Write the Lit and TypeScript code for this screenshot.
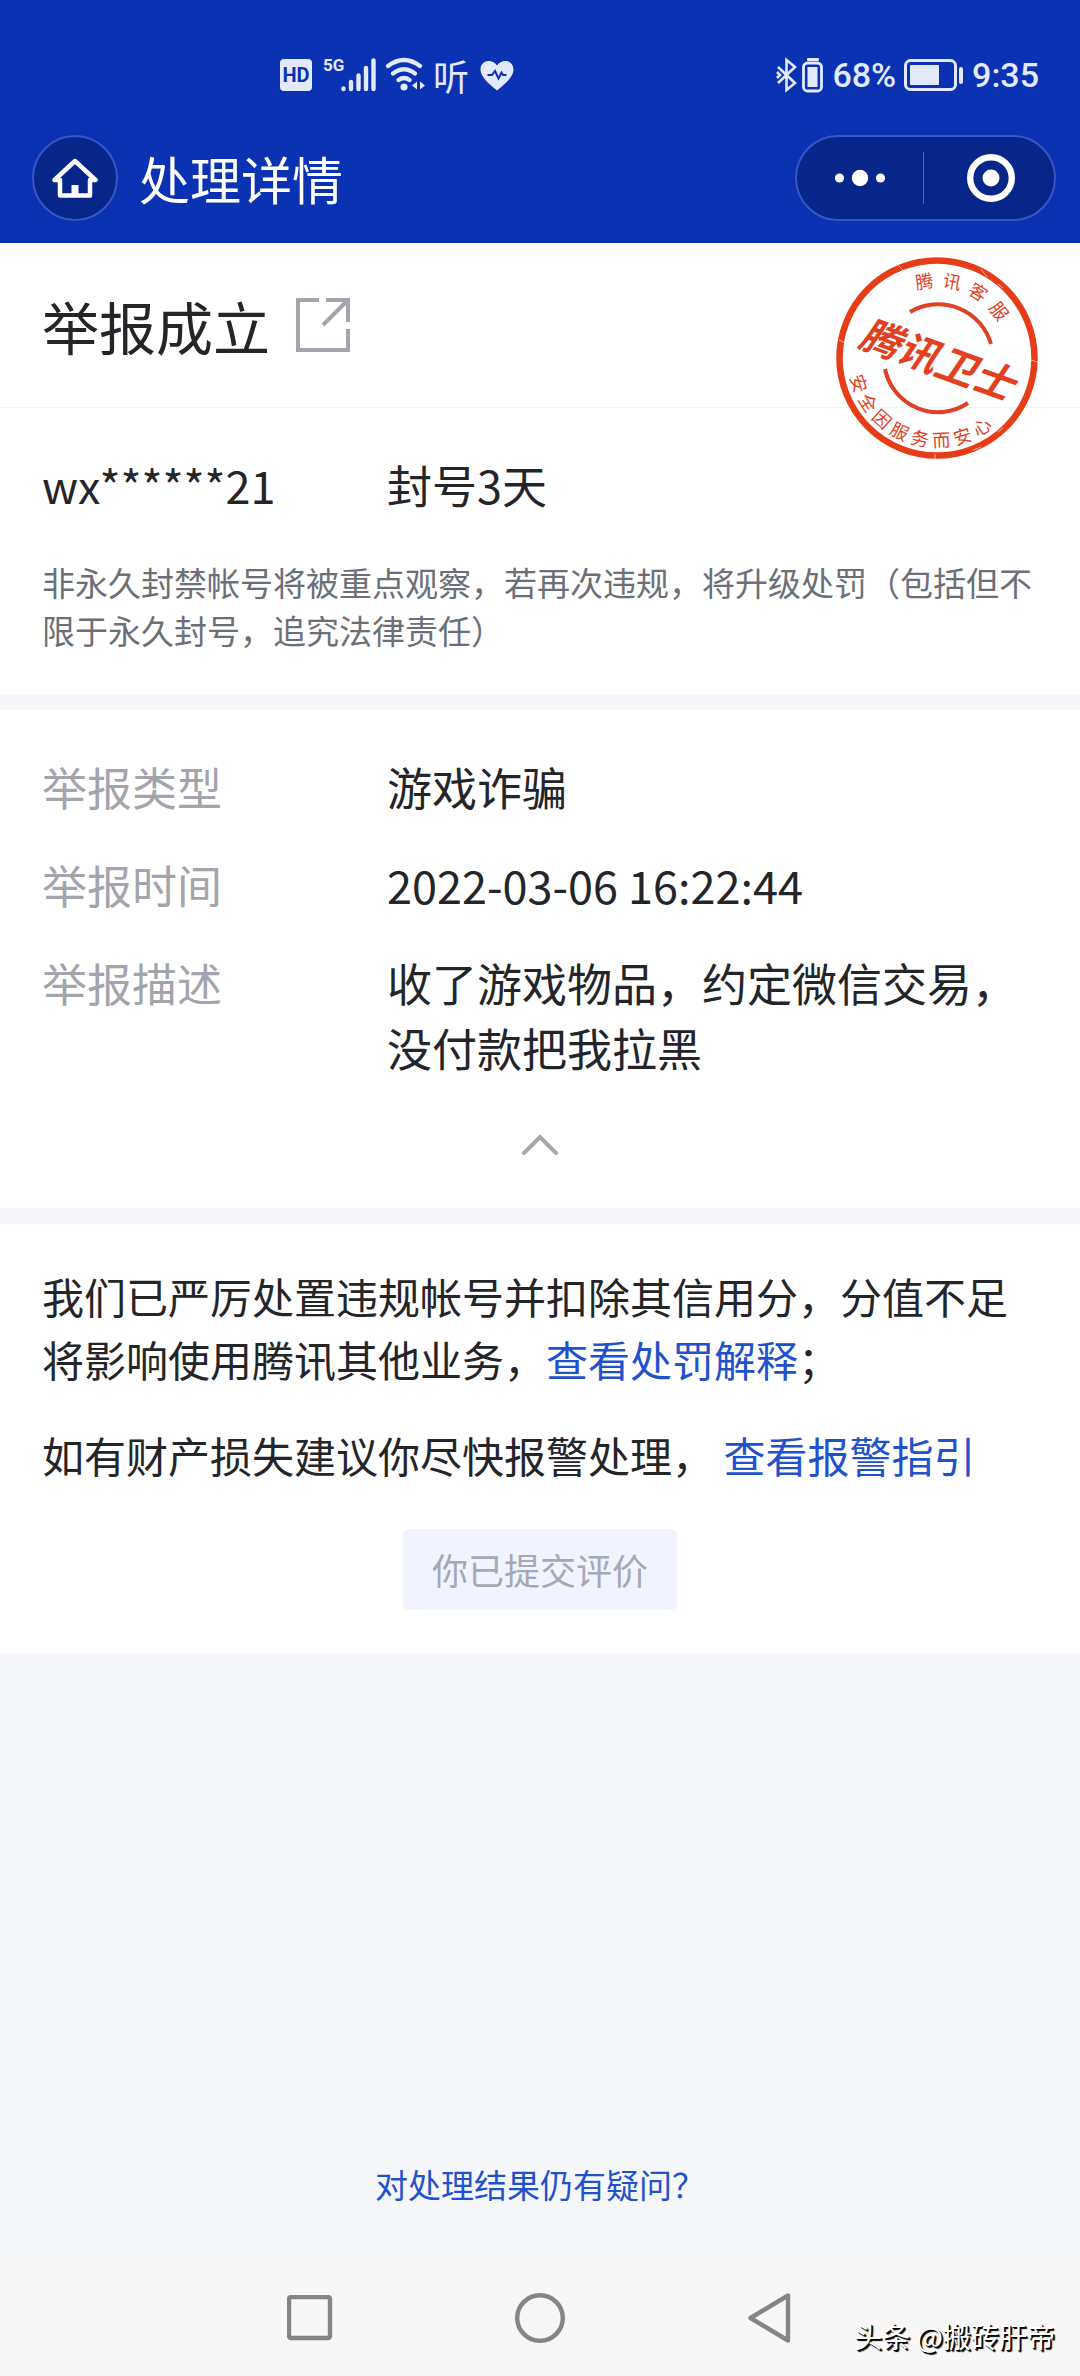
import { LitElement, html, svg, css } from "lit";
import { customElement, state } from "lit/decorators.js";

const font = css`"Noto Sans CJK SC", "Noto Sans", sans-serif`;

@customElement("status-bar")
class StatusBar extends LitElement {
  static styles = css`
    :host {
      display: block;
      color: #e4eafd;
      font-family: Roboto, "Noto Sans CJK SC", sans-serif;
    }
    .bar {
      display: flex;
      align-items: center;
      justify-content: space-between;
      height: 38px;
      padding: 56px 41px 0 279px;
    }
    .group {
      display: flex;
      align-items: center;
      gap: 8px;
    }
    svg {
      display: block;
    }
    .hd {
      font-size: 20px;
      font-weight: 700;
      fill: #0a32b2;
    }
    .net {
      font-family: "Liberation Sans Narrow", Roboto, sans-serif;
      font-size: 17px;
      font-weight: 700;
    }
    .listen {
      width: 36px;
      font-family: "Noto Sans CJK SC", sans-serif;
      font-size: 36px;
      font-weight: 400;
      line-height: 38px;
    }
    .text {
      font-size: 34px;
      font-weight: 500;
      line-height: 38px;
    }
    .pack {
      display: flex;
      align-items: center;
      gap: 4px;
    }
  `;

  render() {
    return html`
      <div class="bar">
        <div class="group">
          <svg width="34" height="36" viewBox="0 0 34 36">
            <rect x="1" y="2" width="32" height="32" rx="4" fill="currentColor" />
            <text class="hd" x="17" y="25" text-anchor="middle">HD</text>
          </svg>
          <svg width="56" height="38" viewBox="0 0 56 38">
            <text class="net" x="2" y="15" fill="currentColor">5G</text>
            <g stroke="currentColor" stroke-width="4.400" stroke-linecap="round">
              <path d="M22.500 32.500v.5M30 26v7M37.500 19.500V33M45 12v21M52.500 4.500V33" />
            </g>
          </svg>
          <svg width="40" height="38" viewBox="0 0 40 38" role="img" aria-label="Wi-Fi">
            <g fill="none" stroke="currentColor" stroke-width="4.200" stroke-linecap="round">
              <path d="M3 10q16-12 32 0M8 17.500q11-8.500 22 0M13.500 24q5.500-4 11 0" />
            </g>
            <circle cx="19" cy="31" r="3.600" fill="currentColor" />
            <path d="M32 25.500v8l-5-4zM35 25.500v8l5-4z" fill="currentColor" />
          </svg>
          <span class="listen">听</span>
          <svg width="42" height="36" viewBox="0 0 42 36" role="img" aria-label="健康">
            <path d="M20 33.500C8 24 3.500 18 3.500 12.500 3.500 7 7.500 4 11.500 4q5.500 0 8.500 4.500Q23 4 28.500 4c4 0 8 3 8 8.500 0 5.500-4.500 11.500-16.500 21z" fill="currentColor" />
            <path d="M10.500 18h4.500l3-4 3.500 7.500 3-6 1.500 2.500h3.500" fill="none" stroke="#0a32b2" stroke-width="2" />
          </svg>
        </div>
        <div class="group">
          <div class="pack">
            <svg width="22" height="36" viewBox="0 0 22 36" role="img" aria-label="蓝牙">
              <path d="M2 10l17 16-8.500 7V3L19 10 2 26M1 15l3 3-3 3" fill="none" stroke="currentColor" stroke-width="2.600" />
            </svg>
            <svg width="22" height="38" viewBox="0 0 22 38" role="img" aria-label="设备电量">
              <rect x="5" y="2" width="12" height="3" rx="1" fill="currentColor" />
              <rect x="1.500" y="7" width="18" height="28" rx="4" fill="none" stroke="currentColor" stroke-width="2.800" />
              <rect x="5.500" y="11" width="10" height="20" fill="currentColor" />
            </svg>
          </div>
          <span class="text">68%</span>
          <svg width="60" height="36" viewBox="0 0 60 36" role="img" aria-label="电池">
            <rect x="1.500" y="3.500" width="50" height="29" rx="5" fill="none" stroke="currentColor" stroke-width="3" />
            <rect x="6" y="8" width="29" height="20" rx="1" fill="currentColor" />
            <rect x="55" y="10" width="4" height="17" rx="2" fill="currentColor" />
          </svg>
          <span class="text">9:35</span>
        </div>
      </div>
    `;
  }
}

@customElement("nav-header")
class NavHeader extends LitElement {
  static styles = css`
    :host {
      display: block;
      font-family: ${font};
    }
    .bar {
      display: flex;
      align-items: center;
      gap: 21px;
      padding: 41px 24px 22px 32px;
    }
    button {
      margin: 0;
      padding: 0;
      border: 0;
      background: none;
      color: #fff;
      display: grid;
      place-items: center;
      cursor: pointer;
    }
    .home {
      width: 86px;
      height: 86px;
      border: 2px solid #3558c4;
      border-radius: 43px;
      background: #062789;
    }
    h1 {
      flex: 1;
      margin: 0;
      color: #fff;
      font-size: 51px;
      line-height: 86px;
      font-weight: 400;
    }
    .capsule {
      display: flex;
      align-items: center;
      box-sizing: border-box;
      width: 261px;
      height: 86px;
      border: 2px solid #3558c4;
      border-radius: 43px;
      background: #062789;
    }
    .capsule button {
      flex: 1;
      height: 82px;
    }
    .capsule .close {
      padding-left: 4px;
    }
    .rule {
      width: 1px;
      height: 52px;
      background: #4a68c2;
    }
  `;

  render() {
    return html`
      <header class="bar">
        <button class="home" aria-label="首页">
          <svg width="46" height="42" viewBox="0 0 46 42" fill="none" stroke="currentColor" stroke-width="4.500" stroke-linejoin="round">
            <path d="M2.500 23L23 4l20.500 19H38v15.500H8V23z" stroke-linecap="round" />
            <path d="M23 28v10" stroke-width="7" />
          </svg>
        </button>
        <h1>处理详情</h1>
        <div class="capsule">
          <button aria-label="更多">
            <svg width="52" height="18" viewBox="0 0 52 18" fill="currentColor">
              <circle cx="5.500" cy="9" r="4.600" />
              <circle cx="26" cy="9" r="8.200" />
              <circle cx="46.500" cy="9" r="4.600" />
            </svg>
          </button>
          <span class="rule"></span>
          <button class="close" aria-label="关闭">
            <svg width="48" height="48" viewBox="0 0 48 48">
              <circle cx="24" cy="24" r="20.800" fill="none" stroke="currentColor" stroke-width="6.400" />
              <circle cx="24" cy="24" r="8.500" fill="currentColor" />
            </svg>
          </button>
        </div>
      </header>
    `;
  }
}

@customElement("seal-stamp")
class SealStamp extends LitElement {
  static styles = css`
    :host {
      display: block;
    }
    svg {
      display: block;
      font-family: ${font};
    }
    .ring {
      font-size: 18px;
    }
    .name {
      font-size: 40px;
      font-weight: 700;
      font-style: italic;
    }
  `;

  /* Characters are set one by one round the centre; an angle of 0 is the top. */
  private ring(chars: string, start: number, step: number, radius: number, inward: boolean) {
    return [...chars].map((c, i) => {
      const a = start + step * i;
      const r = (a * Math.PI) / 180;
      const x = 102 + radius * Math.sin(r);
      const y = 102 - radius * Math.cos(r);
      const turn = inward ? a - 180 : a;
      return svg`<text class="ring" text-anchor="middle" dy="7" transform="translate(${x} ${y}) rotate(${turn})">${c}</text>`;
    });
  }

  render() {
    return html`
      <svg width="204" height="204" viewBox="0 0 204 204" fill="#e2401f" role="img" aria-label="腾讯卫士">
        <circle cx="102" cy="102" r="97.500" fill="none" stroke="#e63c17" stroke-width="6.500" />
        <g fill="none" stroke="#dd4227" stroke-width="4">
          <path d="M75 56A55 55 0 0 1 156 88" />
          <path d="M50 113A54 54 0 0 0 133 147" />
        </g>
        ${this.ring("腾讯客服", -9.5, 20.8, 78, false)}
        ${this.ring("安全因服务而安心", 252, -15, 82, true)}
        <text class="name" text-anchor="middle" transform="translate(102 104) rotate(20)" dy="14">腾讯卫士</text>
        <g stroke="#fff" stroke-width="1" opacity="0.6">
          <path d="M62 8l6 6M146 13l6 8M163 28l5 4M196 104l6 2M4 84l6 3M14 132l5 3M138 194l8-3M100 198v5M168 172l-5 4" />
        </g>
      </svg>
    `;
  }
}

@customElement("app-root")
class AppRoot extends LitElement {
  static styles = css`
    :host {
      display: block;
      font-family: ${font};
      color: #232529;
    }
    .screen {
      display: flex;
      flex-direction: column;
      min-height: 100vh;
      background: #f5f7fb;
    }
    .top {
      background: #0a32b2;
    }
    .card {
      background: #fff;
      position: relative;
    }
    .stack {
      display: flex;
      flex-direction: column;
      gap: 16px;
    }
    .headline {
      display: flex;
      align-items: center;
      gap: 21px;
      padding: 42px;
      border-bottom: 1px solid #f4f5f7;
    }
    h2 {
      margin: 0;
      font-size: 57px;
      line-height: 80px;
      font-weight: 400;
    }
    .seal {
      position: absolute;
      top: 13px;
      right: 41px;
    }
    .share,
    .fold {
      display: grid;
      place-items: center;
      margin: 0;
      padding: 0;
      border: 0;
      background: none;
      cursor: pointer;
    }
    .account {
      padding: 44px 42px 40px;
    }
    dl {
      margin: 0;
    }
    .row {
      display: grid;
      grid-template-columns: 345px 1fr;
      font-size: 45px;
      line-height: 65px;
    }
    dt,
    dd {
      margin: 0;
    }
    dt {
      color: #a3a4ac;
    }
    .user {
      color: inherit;
    }
    .note {
      margin: 41px 0 0;
      color: #6c6f78;
      font-size: 33px;
      line-height: 48px;
    }
    .details {
      display: flex;
      flex-direction: column;
      gap: 33px;
      padding: 44px 42px 0;
    }
    .fold {
      width: 100%;
      height: 46px;
      margin: 42px 0 40px;
    }
    .panel {
      display: flow-root;
    }
    .result {
      display: flex;
      flex-direction: column;
      padding: 40px 42px 43px;
      font-size: 42px;
      line-height: 63px;
    }
    .result p {
      margin: 0 0 33px;
    }
    a {
      color: #1f52cc;
      text-decoration: none;
    }
    .done {
      align-self: center;
      margin: 10px 0 0;
      padding: 14px 29px;
      border: 0;
      border-radius: 6px;
      background: #f1f4fe;
      color: #a5a8b6;
      font: inherit;
      font-size: 36px;
      line-height: 53px;
    }
    .help {
      margin-top: auto;
      padding: 48px 0 50px;
      text-align: center;
      font-size: 33px;
      line-height: 48px;
    }
    .system {
      position: relative;
      display: flex;
      justify-content: center;
      gap: 180px;
      padding: 34px 0 32px;
      background: #f7f7f7;
    }
    .system button {
      display: grid;
      place-items: center;
      width: 50px;
      height: 52px;
      margin: 0;
      padding: 0;
      border: 0;
      background: none;
      color: #858585;
    }
    .mark {
      position: absolute;
      right: 25px;
      bottom: 20px;
      color: #fff;
      font-size: 28px;
      line-height: 40px;
      text-shadow: 1px 1px 0 #000, 2px 2px 1px #000;
    }
  `;

  @state() private open = true;

  render() {
    return html`
      <div class="screen">
        <div class="top">
          <status-bar></status-bar>
          <nav-header></nav-header>
        </div>
        <main class="stack">
          <section class="card">
            <div class="headline">
              <h2>举报成立</h2>
              <button class="share" aria-label="分享">
                <svg width="62" height="56" viewBox="0 0 62 56" fill="none" stroke="#a3a4ac" stroke-width="4">
                  <path d="M28 3H7v50h50V32M35 3h22v22M57 3L32 28" />
                </svg>
              </button>
            </div>
            <seal-stamp class="seal"></seal-stamp>
            <div class="account">
              <dl class="row">
                <dt class="user">wx******21</dt>
                <dd>封号3天</dd>
              </dl>
              <p class="note">非永久封禁帐号将被重点观察，若再次违规，将升级处罚（包括但不限于永久封号，追究法律责任）</p>
            </div>
          </section>
          <section class="card panel">
            <dl class="details">
              <div class="row"><dt>举报类型</dt><dd>游戏诈骗</dd></div>
              <div class="row"><dt>举报时间</dt><dd>2022-03-06 16:22:44</dd></div>
              ${this.open
                ? html`<div class="row"><dt>举报描述</dt><dd>收了游戏物品，约定微信交易，没付款把我拉黑</dd></div>`
                : null}
            </dl>
            <button class="fold" aria-label="收起" aria-expanded=${this.open} @click=${() => (this.open = !this.open)}>
              <svg width="38" height="22" viewBox="0 0 38 22" fill="none" stroke="#a6a7ab" stroke-width="4" stroke-linecap="round">
                <path d="M3 19L19 3l16 16" />
              </svg>
            </button>
          </section>
          <section class="card result">
            <p>我们已严厉处置违规帐号并扣除其信用分，分值不足将影响使用腾讯其他业务，<a href="#explain">查看处罚解释</a>；</p>
            <p>如有财产损失建议你尽快报警处理， <a href="#guide">查看报警指引</a></p>
            <button class="done" disabled>你已提交评价</button>
          </section>
        </main>
        <div class="help"><a href="#help">对处理结果仍有疑问？</a></div>
        <nav class="system">
          <button aria-label="最近任务">
            <svg width="46" height="46" viewBox="0 0 46 46" fill="none" stroke="currentColor" stroke-width="4.400">
              <rect x="2" y="2" width="41" height="41" rx="2" />
            </svg>
          </button>
          <button aria-label="主屏幕">
            <svg width="50" height="50" viewBox="0 0 50 50" fill="none" stroke="currentColor" stroke-width="4.400">
              <circle cx="25" cy="25" r="22.800" />
            </svg>
          </button>
          <button aria-label="返回">
            <svg width="46" height="52" viewBox="0 0 46 52" fill="none" stroke="currentColor" stroke-width="4.400" stroke-linejoin="round">
              <path d="M41 3.500v45L3.500 26z" />
            </svg>
          </button>
          <span class="mark">头条 @搬砖肝帝</span>
        </nav>
      </div>
    `;
  }
}
